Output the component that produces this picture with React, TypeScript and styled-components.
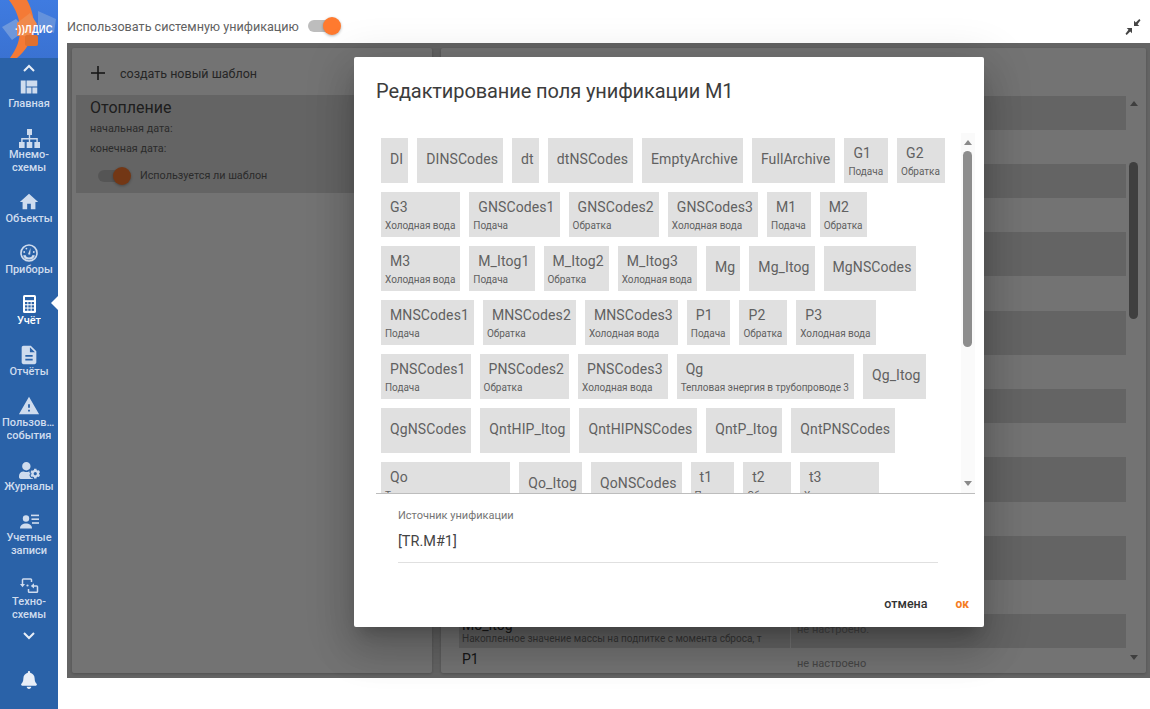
import React from 'react';
import styled, { createGlobalStyle } from 'styled-components';
import { FaBell, FaUserCog } from 'react-icons/fa';
import { MdViewQuilt, MdDescription, MdWarning, MdHome } from 'react-icons/md';

const GlobalStyle = createGlobalStyle`
  html, body {
    margin: 0;
    padding: 0;
    height: 100%;
    background: #fff;
    font-family: Roboto, "Liberation Sans", sans-serif;
    overflow: hidden;
  }
  #root { height: 100%; }
`;

const Page = styled.div`
  display: flex;
  width: 1150px;
  height: 709px;
`;

const Sidebar = styled.nav`
  width: 58px;
  flex: none;
  display: flex;
  flex-direction: column;
  align-items: center;
  background: #2a62a8;
`;

const Logo = styled.div`
  position: relative;
  width: 58px;
  height: 58px;
  overflow: hidden;
  background: linear-gradient(180deg, #3f7be0, #3a72d2);
`;

const LogoText = styled.span`
  position: absolute;
  top: 22px;
  left: 15px;
  font: 700 11px/14px "Liberation Sans", sans-serif;
  color: #fff;
  letter-spacing: 0.3px;
  white-space: nowrap;
  transform: scaleX(0.85);
  transform-origin: left;
`;

const Chevron = styled.div<{ $height: number }>`
  height: ${(p) => p.$height}px;
  display: flex;
  align-items: center;
  justify-content: center;
`;

const NavItem = styled.div<{ $active?: boolean }>`
  position: relative;
  width: 58px;
  display: flex;
  flex-direction: column;
  align-items: center;
  color: ${(p) => (p.$active ? '#fff' : '#cfdcee')};

  & + & {
    margin-top: 19px;
  }

  ${(p) =>
    p.$active &&
    `&::after {
      content: '';
      position: absolute;
      right: 0;
      top: 1px;
      border: 7px solid transparent;
      border-left: 0;
      border-right-color: #fff;
    }`}
`;

const NavIcon = styled.div`
  height: 18px;
  margin-bottom: 1px;
  display: flex;
  align-items: center;
  justify-content: center;
`;

const NavLabel = styled.div`
  max-width: 54px;
  font-size: 11px;
  font-weight: 500;
  line-height: 13px;
  text-align: center;
  white-space: nowrap;
  overflow: hidden;
  text-overflow: ellipsis;
`;

const BellSlot = styled.div`
  margin-top: auto;
  padding-bottom: 18px;
  height: 20px;
  color: #e8eef7;
`;

const Main = styled.div`
  flex: 1;
  min-width: 0;
  display: flex;
  flex-direction: column;
  padding-left: 9px;
`;

const TopBar = styled.header`
  height: 43px;
  flex: none;
  display: flex;
  align-items: center;
  padding: 9px 9px 0 0;
  box-sizing: border-box;
`;

const TopLabel = styled.span`
  font-size: 12.6px;
  color: #616161;
  margin-right: 9px;
`;

const Track = styled.span`
  position: relative;
  display: inline-block;
  width: 29px;
  height: 12px;
  border-radius: 6px;
  background: #bdbdbd;
  flex: none;
`;

const Thumb = styled.span`
  position: absolute;
  right: -4px;
  top: -3px;
  width: 18px;
  height: 18px;
  border-radius: 50%;
  background: #ff7a2f;
  box-shadow: 0 1px 3px rgba(0, 0, 0, 0.3);
`;

const CollapseButton = styled.div`
  margin: 2px 0 0 auto;
  width: 16px;
  height: 16px;
  color: #444;
`;

const Workspace = styled.div`
  position: relative;
  height: 635px;
  flex: none;
  display: flex;
  gap: 9px;
  padding: 5px 4px 5px 5px;
  box-sizing: border-box;
  background: #dedede;
`;

const Card = styled.section<{ $width: number }>`
  width: ${(p) => p.$width}px;
  flex: none;
  background: #fff;
  border-radius: 2px;
  box-shadow: 0 1px 3px rgba(0, 0, 0, 0.2);
  overflow: hidden;
`;

const CreateRow = styled.div`
  height: 47px;
  display: flex;
  align-items: center;
  padding: 3px 0 0 19px;
  box-sizing: border-box;
  gap: 15px;
  font-size: 12.5px;
  color: #555;
`;

const TemplateCard = styled.div`
  margin: 0 4px;
  height: 98px;
  padding: 4px 14px;
  box-sizing: border-box;
  background: #dedede;
  color: #616161;
`;

const TemplateTitle = styled.div`
  font-size: 16px;
  line-height: 18px;
  color: #444;
  margin-bottom: 2px;
`;

const TemplateLine = styled.div`
  font-size: 10.8px;
  line-height: 20px;
`;

const TemplateSwitchRow = styled.div`
  display: flex;
  align-items: center;
  margin: 10px 0 0 8px;
  gap: 13px;
  font-size: 10.8px;
`;

const ListBody = styled.div`
  display: flex;
  height: 100%;
`;

const ListRows = styled.div`
  width: 685px;
  flex: none;
  padding-top: 48px;
  padding-left: 18px;
  box-sizing: border-box;
`;

const ListRow = styled.div<{ $height: number; $dark?: boolean }>`
  height: ${(p) => p.$height}px;
  display: flex;
  background: ${(p) => (p.$dark ? '#dedede' : 'transparent')};
  overflow: hidden;
  color: #333;
`;

const RowName = styled.div`
  width: 332px;
  flex: none;
  box-sizing: border-box;
  padding: 3px 0 0 3px;
  border-right: 1px solid #fff;
  font-size: 14px;
  line-height: 16px;
`;

const RowHint = styled.div`
  font-size: 10px;
  line-height: 12px;
  color: #777;
  white-space: nowrap;
`;

const RowValue = styled.div`
  padding: 9px 0 0 6px;
  font-size: 11px;
  line-height: 14px;
  color: #999;
`;

const BackScrollbar = styled.div`
  width: 10px;
  margin-left: 3px;
  padding-top: 53px;
  box-sizing: border-box;
  display: flex;
  flex-direction: column;
  align-items: center;
`;

const BackThumb = styled.div`
  width: 9px;
  height: 157px;
  margin: 56px 1px 0 0;
  border-radius: 5px;
  background: #8c8c8c;
`;

const Backdrop = styled.div`
  position: absolute;
  inset: 0;
  background: rgba(0, 0, 0, 0.55);
`;

const Dialog = styled.div`
  position: absolute;
  left: 287px;
  top: 14px;
  width: 630px;
  height: 570px;
  display: flex;
  flex-direction: column;
  background: #fff;
  border-radius: 2px;
  box-shadow: 0 11px 15px -7px rgba(0, 0, 0, 0.2), 0 24px 38px 3px rgba(0, 0, 0, 0.14),
    0 9px 46px 8px rgba(0, 0, 0, 0.12);
`;

const DialogTitle = styled.h2`
  margin: 0;
  padding: 21px 22px 0;
  height: 76px;
  box-sizing: border-box;
  font-size: 20px;
  font-weight: 400;
  letter-spacing: -0.1px;
  line-height: 26px;
  color: #3c3c3c;
`;

const ChipScroller = styled.div`
  height: 360px;
  margin: 0 9px 0 22px;
  flex: none;
  display: flex;
  border-bottom: 1px solid #bdbdbd;
`;

const ChipViewport = styled.div`
  flex: 1;
  min-width: 0;
  overflow: hidden;
`;

const ChipList = styled.div`
  display: flex;
  flex-wrap: wrap;
  align-content: flex-start;
  gap: 9px;
  padding: 5px 0 0 5px;
  width: 570px;
`;

const Chip = styled.div<{ $sub?: boolean }>`
  height: 45px;
  box-sizing: border-box;
  padding: ${(p) => (p.$sub ? '7px 5px 0 4px' : '0 5px 2px 9px')};
  display: flex;
  flex-direction: column;
  justify-content: ${(p) => (p.$sub ? 'flex-start' : 'center')};
  background: #e0e0e0;
  color: #616161;
  font-size: 14px;
  letter-spacing: 0.1px;
  line-height: 17px;
  white-space: nowrap;
`;

const ChipName = styled.span`
  padding-left: 5px;
`;

const ChipSub = styled.span`
  margin-top: 4px;
  font-size: 10px;
  letter-spacing: -0.03px;
  line-height: 12px;
`;

const Scrollbar = styled.div`
  width: 14px;
  flex: none;
  padding-top: 7px;
  box-sizing: border-box;
  display: flex;
  flex-direction: column;
  align-items: center;
  background: #fafafa;
`;

const ArrowUp = styled.div<{ $color?: string }>`
  border: 4px solid transparent;
  border-top: 0;
  border-bottom: 5px solid ${(p) => p.$color || '#8a8a8a'};
  width: 0;
`;

const ArrowDown = styled.div<{ $color?: string; $bottom: number }>`
  margin-top: auto;
  margin-bottom: ${(p) => p.$bottom}px;
  border: 4px solid transparent;
  border-bottom: 0;
  border-top: 5px solid ${(p) => p.$color || '#8a8a8a'};
  width: 0;
`;

const ScrollThumb = styled.div`
  width: 9px;
  height: 196px;
  margin: 6px 1px 0 0;
  border-radius: 5px;
  background: #8d8d8d;
`;

const Field = styled.div`
  margin: 15px 46px 0 44px;
  border-bottom: 1px solid #e0e0e0;
  height: 53px;
`;

const FieldLabel = styled.div`
  font-size: 11px;
  line-height: 13px;
  color: #757575;
`;

const FieldValue = styled.div`
  margin-top: 10px;
  font-size: 14.5px;
  line-height: 20px;
  color: #444;
`;

const Actions = styled.div`
  margin-top: auto;
  height: 31px;
  display: flex;
  justify-content: flex-end;
  gap: 28px;
  padding-right: 15px;
  line-height: 16px;
`;

const ActionButton = styled.span<{ $primary?: boolean }>`
  font-size: ${(p) => (p.$primary ? 12 : 12.5)}px;
  color: ${(p) => (p.$primary ? '#f57c1f' : '#333')};
  font-weight: ${(p) => (p.$primary ? 700 : 500)};
`;

const SitemapIcon = () => (
  <svg width="21" height="19" viewBox="0 0 21 19" fill="currentColor">
    <rect x="8" y="0" width="5" height="6" />
    <rect x="0" y="13" width="5.6" height="6" />
    <rect x="7.7" y="13" width="5.6" height="6" />
    <rect x="15.4" y="13" width="5.6" height="6" />
    <path d="M9.8 6h1.4v3h7.6v4h-1.4v-2.6h-6.2V13H9.8v-2.6H3.6V13H2.2V9h7.6z" />
  </svg>
);

const GaugeIcon = () => (
  <svg width="18" height="18" viewBox="0 0 18 18">
    <circle cx="9" cy="9" r="8" fill="none" stroke="currentColor" strokeWidth="1.6" />
    <path d="M3 11.4a6.4 6.4 0 0 0 12 0l-2.4-.4a3.8 3.8 0 0 1-7.2 0z" fill="currentColor" />
    <path d="M8 10.2 L10.6 3.8 L10.2 10.8 Z" fill="currentColor" />
    <circle cx="4.2" cy="8" r="0.9" fill="currentColor" />
    <circle cx="6.4" cy="4.6" r="0.9" fill="currentColor" />
    <circle cx="13.8" cy="8" r="0.9" fill="currentColor" />
  </svg>
);

const CalculatorIcon = () => (
  <svg width="13" height="18" viewBox="0 0 13 18">
    <rect width="13" height="18" rx="1.6" fill="currentColor" />
    <g fill="#2a62a8">
      <rect x="2" y="2" width="9" height="3.2" />
      <rect x="2" y="7" width="2.4" height="2.2" />
      <rect x="5.3" y="7" width="2.4" height="2.2" />
      <rect x="8.6" y="7" width="2.4" height="2.2" />
      <rect x="2" y="10.3" width="2.4" height="2.2" />
      <rect x="5.3" y="10.3" width="2.4" height="2.2" />
      <rect x="8.6" y="10.3" width="2.4" height="2.2" />
      <rect x="2" y="13.6" width="2.4" height="2.2" />
      <rect x="5.3" y="13.6" width="2.4" height="2.2" />
      <rect x="8.6" y="13.6" width="2.4" height="2.2" />
    </g>
  </svg>
);

const AccountsIcon = () => (
  <svg width="19" height="15" viewBox="0 0 19 15" fill="currentColor">
    <circle cx="6" cy="4.5" r="3.2" />
    <path d="M0 14.5c0-3.2 2.8-5 6-5s6 1.800 6 5z" />
    <rect x="11" y="0.6" width="8" height="1.6" />
    <rect x="11.500" y="4.400" width="7.500" height="1.6" />
    <rect x="12" y="8.200" width="7" height="1.6" />
  </svg>
);

const SchemeIcon = () => (
  <svg width="19" height="15" viewBox="0 0 19 15" fill="none" stroke="currentColor" strokeWidth="1.5">
    <path d="M2.500 7V1.700a.8.8 0 0 1 .8-.8h7.400a.8.8 0 0 1 .8.8V4" />
    <path d="M0 6h5L2.500 9.200z" fill="currentColor" stroke="none" />
    <path d="M13 8h3.700a.8.8 0 0 1 .8.8v4.600a.8.8 0 0 1-.8.8H9.300a.8.8 0 0 1-.8-.8V11" />
    <path d="M14 5.300v5.200L10.800 8z" fill="currentColor" stroke="none" />
    <circle cx="7.500" cy="7.500" r="1.100" fill="currentColor" stroke="none" />
  </svg>
);

const ChevronIcon = ({ up }: { up?: boolean }) => (
  <svg width="12" height="8" viewBox="0 0 12 8" fill="none" stroke="#e8eef7" strokeWidth="2">
    <path d={up ? 'M1 7l5-5 5 5' : 'M1 1l5 5 5-5'} />
  </svg>
);

const CollapseIcon = () => (
  <svg width="16" height="16" viewBox="0 0 16 16" fill="currentColor">
    <path d="M15.500 1.300 14.300 0 10.800 3.500 9 1.700V7h5.300l-1.800-1.800z" />
    <path d="M0.500 14.700 1.700 16l3.500-3.500L7 14.300V9H1.700l1.800 1.800z" />
  </svg>
);

const LogoArt = () => (
  <svg width="58" height="58" viewBox="0 0 58 58">
    <path d="M2 27 L16 19 L26 30 L12 40Z" fill="#7fa3dc" opacity="0.75" />
    <path d="M38 11 L56 19 L54 33 L38 25Z" fill="#7fa3dc" opacity="0.6" />
    <path d="M9 0 H27 C38 20 36 42 17 58 H10 C24 40 23 18 9 0Z" fill="#f47a36" />
    <path d="M17 23 L30 13 L37 24 L28 36 H17Z" fill="#f08a4c" />
    <rect x="25" y="35" width="13" height="11" rx="2" fill="#e0702f" />
  </svg>
);

type ChipData = { name: string; sub?: string };

const chips: ChipData[] = [
  { name: 'DI' },
  { name: 'DINSCodes' },
  { name: 'dt' },
  { name: 'dtNSCodes' },
  { name: 'EmptyArchive' },
  { name: 'FullArchive' },
  { name: 'G1', sub: 'Подача' },
  { name: 'G2', sub: 'Обратка' },
  { name: 'G3', sub: 'Холодная вода' },
  { name: 'GNSCodes1', sub: 'Подача' },
  { name: 'GNSCodes2', sub: 'Обратка' },
  { name: 'GNSCodes3', sub: 'Холодная вода' },
  { name: 'M1', sub: 'Подача' },
  { name: 'M2', sub: 'Обратка' },
  { name: 'M3', sub: 'Холодная вода' },
  { name: 'M_Itog1', sub: 'Подача' },
  { name: 'M_Itog2', sub: 'Обратка' },
  { name: 'M_Itog3', sub: 'Холодная вода' },
  { name: 'Mg' },
  { name: 'Mg_Itog' },
  { name: 'MgNSCodes' },
  { name: 'MNSCodes1', sub: 'Подача' },
  { name: 'MNSCodes2', sub: 'Обратка' },
  { name: 'MNSCodes3', sub: 'Холодная вода' },
  { name: 'P1', sub: 'Подача' },
  { name: 'P2', sub: 'Обратка' },
  { name: 'P3', sub: 'Холодная вода' },
  { name: 'PNSCodes1', sub: 'Подача' },
  { name: 'PNSCodes2', sub: 'Обратка' },
  { name: 'PNSCodes3', sub: 'Холодная вода' },
  { name: 'Qg', sub: 'Тепловая энергия в трубопроводе 3' },
  { name: 'Qg_Itog' },
  { name: 'QgNSCodes' },
  { name: 'QntHIP_Itog' },
  { name: 'QntHIPNSCodes' },
  { name: 'QntP_Itog' },
  { name: 'QntPNSCodes' },
  { name: 'Qo', sub: 'Тепловая энергия подачи' },
  { name: 'Qo_Itog' },
  { name: 'QoNSCodes' },
  { name: 't1', sub: 'Подача' },
  { name: 't2', sub: 'Обратка' },
  { name: 't3', sub: 'Холодная вода' },
];

const navItems = [
  { icon: <MdViewQuilt size={22} />, lines: ['Главная'] },
  { icon: <SitemapIcon />, lines: ['Мнемо-', 'схемы'] },
  { icon: <MdHome size={22} />, lines: ['Объекты'] },
  { icon: <GaugeIcon />, lines: ['Приборы'] },
  { icon: <CalculatorIcon />, lines: ['Учёт'], active: true },
  { icon: <MdDescription size={22} />, lines: ['Отчёты'] },
  { icon: <MdWarning size={22} />, lines: ['Пользовательские', 'события'] },
  { icon: <FaUserCog size={21} />, lines: ['Журналы'] },
  { icon: <AccountsIcon />, lines: ['Учетные', 'записи'] },
  { icon: <SchemeIcon />, lines: ['Техно-', 'схемы'] },
];

const rows = [
  { height: 34, dark: true },
  { height: 34 },
  { height: 34, dark: true },
  { height: 34 },
  { height: 44, dark: true },
  { height: 35 },
  { height: 44, dark: true },
  { height: 34 },
  { height: 34, dark: true },
  { height: 34 },
  { height: 45, dark: true },
  { height: 34 },
  { height: 44, dark: true },
  { height: 34 },
  {
    height: 34,
    dark: true,
    name: 'Mo_Itog',
    hint: 'Накопленное значение массы на подпитке с момента сброса, т',
    value: 'не настроено.',
  },
  { height: 19, name: 'P1', value: 'не настроено' },
];

export default function App() {
  return (
    <Page>
      <GlobalStyle />
      <Sidebar>
        <Logo>
          <LogoArt />
          <LogoText>·))ЛДИС</LogoText>
        </Logo>
        <Chevron $height={20}>
          <ChevronIcon up />
        </Chevron>
        {navItems.map((item) => (
          <NavItem key={item.lines[0]} $active={item.active}>
            <NavIcon>{item.icon}</NavIcon>
            {item.lines.map((line) => (
              <NavLabel key={line}>{line}</NavLabel>
            ))}
          </NavItem>
        ))}
        <Chevron $height={30}>
          <ChevronIcon />
        </Chevron>
        <BellSlot>
          <FaBell size={18} />
        </BellSlot>
      </Sidebar>
      <Main>
        <TopBar>
          <TopLabel>Использовать системную унификацию</TopLabel>
          <Track>
            <Thumb />
          </Track>
          <CollapseButton>
            <CollapseIcon />
          </CollapseButton>
        </TopBar>
        <Workspace>
          <Card $width={360}>
            <CreateRow>
              <svg width="14" height="14" viewBox="0 0 14 14" fill="#333">
                <rect x="6.2" width="1.6" height="14" />
                <rect y="6.2" width="14" height="1.6" />
              </svg>
              создать новый шаблон
            </CreateRow>
            <TemplateCard>
              <TemplateTitle>Отопление</TemplateTitle>
              <TemplateLine>начальная дата:</TemplateLine>
              <TemplateLine>конечная дата:</TemplateLine>
              <TemplateSwitchRow>
                <Track>
                  <Thumb />
                </Track>
                Используется ли шаблон
              </TemplateSwitchRow>
            </TemplateCard>
          </Card>
          <Card $width={705}>
            <ListBody>
              <ListRows>
                {rows.map((row, i) => (
                  <ListRow key={i} $height={row.height} $dark={row.dark}>
                    {row.name && (
                      <>
                        <RowName>
                          {row.name}
                          {row.hint && <RowHint>{row.hint}</RowHint>}
                        </RowName>
                        <RowValue>{row.value}</RowValue>
                      </>
                    )}
                  </ListRow>
                ))}
              </ListRows>
              <BackScrollbar>
                <ArrowUp $color="#8c8c8c" />
                <BackThumb />
                <ArrowDown $color="#8c8c8c" $bottom={13} />
              </BackScrollbar>
            </ListBody>
          </Card>
          <Backdrop />
          <Dialog>
            <DialogTitle>Редактирование поля унификации М1</DialogTitle>
            <ChipScroller>
              <ChipViewport>
                <ChipList>
                  {chips.map((chip) => (
                    <Chip key={chip.name} $sub={!!chip.sub}>
                      {chip.sub ? (
                        <>
                          <ChipName>{chip.name}</ChipName>
                          <ChipSub>{chip.sub}</ChipSub>
                        </>
                      ) : (
                        chip.name
                      )}
                    </Chip>
                  ))}
                </ChipList>
              </ChipViewport>
              <Scrollbar>
                <ArrowUp />
                <ScrollThumb />
                <ArrowDown $bottom={7} />
              </Scrollbar>
            </ChipScroller>
            <Field>
              <FieldLabel>Источник унификации</FieldLabel>
              <FieldValue>[TR.M#1]</FieldValue>
            </Field>
            <Actions>
              <ActionButton>отмена</ActionButton>
              <ActionButton $primary>ок</ActionButton>
            </Actions>
          </Dialog>
        </Workspace>
      </Main>
    </Page>
  );
}
